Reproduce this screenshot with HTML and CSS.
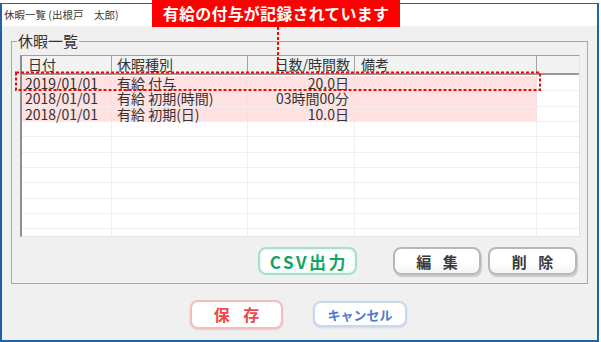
FILE: index.html
```html
<!DOCTYPE html>
<html lang="ja">
<head>
<meta charset="utf-8">
<title>休暇一覧</title>
<link rel="stylesheet" href="styles.css">
</head>
<body>
<div class="window">
  <div class="titlebar">休暇一覧 (出根戸　太郎)</div>
  <div class="client">
    <div class="group">
      <div class="legend">休暇一覧</div>
      <div class="list">
        <div class="lhead">
          <div class="hc c1">日付</div>
          <div class="hc c2">休暇種別</div>
          <div class="hc c3">日数/時間数</div>
          <div class="hc c4">備考</div>
          <div class="hc c5"></div>
        </div>
        <div class="lbody">
          <div class="row pk"><div class="cell c1">2019/01/01</div><div class="cell c2">有給 付与</div><div class="cell c3">20.0日</div><div class="cell c4"></div><div class="cell c5"></div></div>
          <div class="row pk"><div class="cell c1">2018/01/01</div><div class="cell c2">有給 初期(時間)</div><div class="cell c3">03時間00分</div><div class="cell c4"></div><div class="cell c5"></div></div>
          <div class="row pk"><div class="cell c1">2018/01/01</div><div class="cell c2">有給 初期(日)</div><div class="cell c3">10.0日</div><div class="cell c4"></div><div class="cell c5"></div></div>
          <div class="row"><div class="cell c1"></div><div class="cell c2"></div><div class="cell c3"></div><div class="cell c4"></div><div class="cell c5"></div></div>
          <div class="row"><div class="cell c1"></div><div class="cell c2"></div><div class="cell c3"></div><div class="cell c4"></div><div class="cell c5"></div></div>
          <div class="row"><div class="cell c1"></div><div class="cell c2"></div><div class="cell c3"></div><div class="cell c4"></div><div class="cell c5"></div></div>
          <div class="row"><div class="cell c1"></div><div class="cell c2"></div><div class="cell c3"></div><div class="cell c4"></div><div class="cell c5"></div></div>
          <div class="row"><div class="cell c1"></div><div class="cell c2"></div><div class="cell c3"></div><div class="cell c4"></div><div class="cell c5"></div></div>
          <div class="row"><div class="cell c1"></div><div class="cell c2"></div><div class="cell c3"></div><div class="cell c4"></div><div class="cell c5"></div></div>
          <div class="row"><div class="cell c1"></div><div class="cell c2"></div><div class="cell c3"></div><div class="cell c4"></div><div class="cell c5"></div></div>
          <div class="row"><div class="cell c1"></div><div class="cell c2"></div><div class="cell c3"></div><div class="cell c4"></div><div class="cell c5"></div></div>
        </div>
      </div>
      <div class="actions">
        <button class="btn csv">CSV出力</button>
        <button class="btn gray edit">編 集</button>
        <button class="btn gray del">削 除</button>
      </div>
    </div>
    <div class="footer">
      <button class="btn save">保 存</button>
      <button class="btn cancel">キャンセル</button>
    </div>
  </div>
</div>
<div class="banner">有給の付与が記録されています</div>
<svg class="marks" width="601" height="342" viewBox="0 0 601 342" aria-hidden="true">
  <line x1="278" y1="27" x2="278" y2="71.5" stroke="#f00" stroke-width="2" stroke-dasharray="3 2"/>
  <rect x="16" y="72.5" width="524" height="17.5" fill="none" stroke="#f00" stroke-width="2" stroke-dasharray="3 2"/>
</svg>
</body>
</html>
```
FILE: styles.css
```css
html, body {
  margin: 0;
  padding: 0;
}
body {
  position: relative;
  width: 601px;
  height: 342px;
  overflow: hidden;
  background: #fff;
  font-family: "Noto Sans CJK JP", sans-serif;
  color: #333;
}
.window {
  box-sizing: border-box;
  margin-top: 3px;
  width: 599px;
  height: 339px;
  border: 2px solid #1f62a6;
  border-top-width: 1px;
  display: flex;
  flex-direction: column;
}
.titlebar {
  height: 22px;
  line-height: 22px;
  padding-left: 2px;
  font-size: 10.5px;
  color: #3a3a3a;
  background: #fff;
  white-space: pre;
}
.client {
  flex: 1;
  background: #f0f0f0;
  display: flex;
  flex-direction: column;
}
.group {
  box-sizing: border-box;
  margin: 15px 9px 0 9px;
  height: 243px;
  border: 1px solid #a8a8a8;
  display: flex;
  flex-direction: column;
}
.legend {
  margin-top: -9px;
  margin-left: 5px;
  width: fit-content;
  height: 15px;
  line-height: 15px;
  padding: 0 1px;
  font-size: 15px;
  background: #f0f0f0;
  color: #333;
}
.list {
  box-sizing: border-box;
  margin-top: 7px;
  margin-left: 8px;
  width: 560px;
  height: 182px;
  background: #fff;
  border-top: 1px solid #a0a0a0;
  border-left: 2px solid #8e8e8e;
  border-right: 1px solid #e2e2e2;
  border-bottom: 1px solid #e2e2e2;
  overflow: hidden;
  font-size: 14px;
}
.lhead {
  display: flex;
  height: 17px;
  background: #f2f2f2;
  border-bottom: 2px solid #9a9a9a;
}
.hc {
  box-sizing: border-box;
  height: 17px;
  line-height: 16px;
  border-right: 1px solid #a2a2a2;
  white-space: nowrap;
  color: #333;
}
.c1 { width: 90px; flex: none; }
.c2 { width: 136px; flex: none; }
.c3 { width: 107px; flex: none; }
.c4 { width: 182px; flex: none; }
.c5 { flex: 1; }
.hc.c1 { padding-left: 6px; }
.hc.c2 { padding-left: 5px; }
.hc.c3 { text-align: right; padding-right: 4px; }
.hc.c4 { padding-left: 6px; }
.hc.c5 { border-right: none; }
.lbody {
  padding-top: 1px;
}
.row {
  box-sizing: border-box;
  display: flex;
  height: 15.35px;
  border-bottom: 1px solid #efefef;
}
.cell {
  box-sizing: border-box;
  line-height: 14px;
  border-right: 1px solid #efefef;
  white-space: nowrap;
  color: #333;
}
.cell.c1 { padding-left: 3px; }
.cell.c2 { padding-left: 5px; }
.cell.c3 { text-align: right; padding-right: 5px; }
.cell.c5 { border-right: none; }
.row.pk .cell.c1,
.row.pk .cell.c2,
.row.pk .cell.c3,
.row.pk .cell.c4 {
  background: #ffe1e1;
  border-right-color: #f8dede;
}
.actions {
  display: flex;
  justify-content: flex-end;
  margin-top: 10px;
  margin-right: 10px;
}
.btn {
  box-sizing: border-box;
  height: 28px;
  padding: 0;
  margin: 0;
  border-radius: 8px;
  background: #fff;
  font-family: "Noto Sans CJK JP", sans-serif;
  font-weight: bold;
  display: flex;
  align-items: center;
  justify-content: center;
  white-space: pre;
}
.csv {
  width: 99px;
  margin-right: 36px;
  border: 2px solid #a4e2c6;
  box-shadow: inset 0 0 3px #c9f1df;
  color: #13a467;
  font-size: 17px;
  letter-spacing: 2.5px;
  padding-left: 3px;
}
.gray {
  width: 88px;
  border: 2px solid #b8b8b8;
  box-shadow: 1px 2px 1px rgba(0, 0, 0, 0.16);
  background: linear-gradient(#ffffff 55%, #f3f3f3);
  color: #3a3a3a;
  font-size: 15px;
  letter-spacing: 4px;
  padding-left: 4px;
}
.edit { margin-right: 7px; }
.del { width: 89px; }
.footer {
  flex: 1;
  display: flex;
  justify-content: center;
  align-items: center;
  gap: 30px;
  padding-top: 4px;
  padding-right: 2px;
}
.save {
  width: 93px;
  height: 29px;
  border: 2px solid #f6bcbc;
  box-shadow: 0 1px 2px rgba(0, 0, 0, 0.12);
  color: #f04747;
  font-size: 16px;
  letter-spacing: 5px;
  padding-left: 5px;
}
.cancel {
  width: 94px;
  height: 26px;
  border: 2px solid #c8d7f2;
  box-shadow: 0 1px 2px rgba(0, 0, 0, 0.1);
  color: #4c7ace;
  font-size: 13px;
}
.banner {
  position: absolute;
  top: 0;
  left: 152px;
  width: 248px;
  height: 27px;
  background: #f00;
  color: #fff;
  font-weight: bold;
  font-size: 16px;
  line-height: 27px;
  text-align: center;
  letter-spacing: 0.2px;
}
.marks {
  position: absolute;
  top: 0;
  left: 0;
  pointer-events: none;
}
```
